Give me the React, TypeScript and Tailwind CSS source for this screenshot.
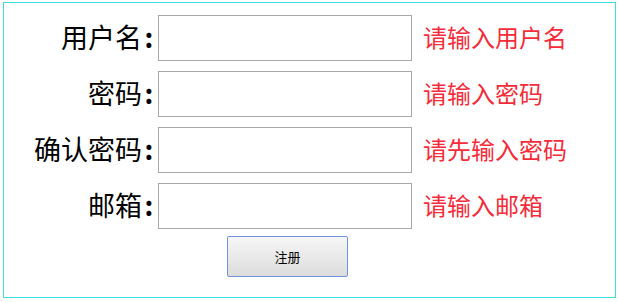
import React from "react";

const rows = [
  { label: "用户名", hint: "请输入用户名", type: "text" },
  { label: "密码", hint: "请输入密码", type: "password" },
  { label: "确认密码", hint: "请先输入密码", type: "password" },
  { label: "邮箱", hint: "请输入邮箱", type: "text" },
];

export default function App() {
  return (
    <div className="w-[618px] h-[302px] bg-white overflow-hidden">
      <div
        className="mt-[2px] ml-[3px] w-[613px] h-[296px] border border-[#3fdede] pt-[12px] flex flex-col"
        style={{ fontFamily: '"Noto Sans CJK SC", sans-serif' }}
      >
        <div className="flex flex-col gap-[10px]">
          {rows.map((r) => (
            <div key={r.label} className="flex items-center h-[46px]">
              <div className="w-[152px] pb-[3px] flex justify-end items-center text-[27px] leading-none text-black">
                <span>{r.label}</span>
                <span className="inline-block w-[14px] text-center font-bold">:</span>
              </div>
              <input
                type={r.type}
                className="ml-[2px] w-[254px] h-[46px] border border-[#a9a9a9] bg-white outline-none"
              />
              <div className="ml-[11px] pb-[3px] text-[24px] leading-none text-[#f52c3a]">
                {r.hint}
              </div>
            </div>
          ))}
        </div>
        <div className="mt-[7px] pl-[223px]">
          <button className="w-[121px] h-[41px] border border-[#6f92dc] rounded-[2px] bg-gradient-to-b from-[#f7f7f7] to-[#dcdcdc] text-[13px] text-black">
            注册
          </button>
        </div>
      </div>
    </div>
  );
}
